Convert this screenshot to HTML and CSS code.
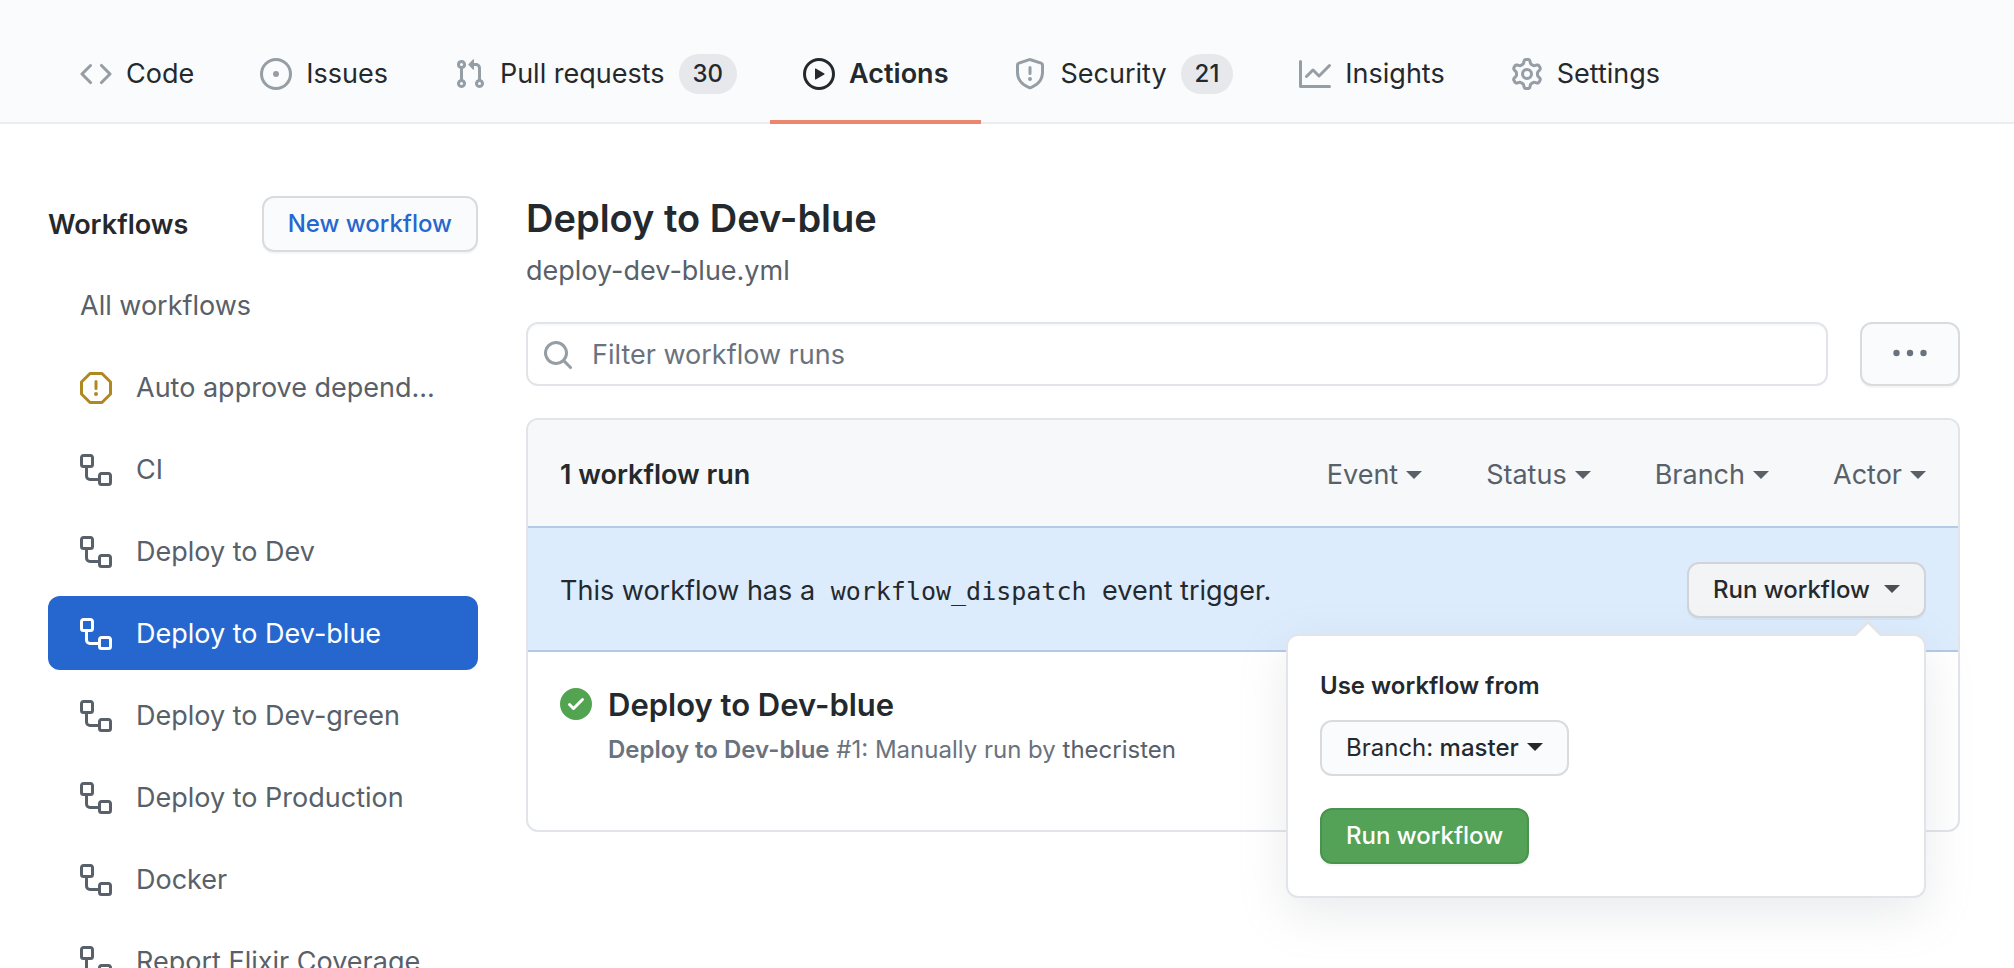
FILE: index.html
```html
<!DOCTYPE html>
<html lang="en">
<head>
<meta charset="utf-8">
<title>Actions · Deploy to Dev-blue</title>
<link rel="stylesheet" href="styles.css">
</head>
<body>
<svg class="sprite" aria-hidden="true">
  <symbol id="i-code" viewBox="0 0 16 16"><path d="M4.72 3.22a.75.75 0 011.06 1.06L2.06 8l3.72 3.72a.75.75 0 11-1.06 1.06L.47 8.53a.75.75 0 010-1.06l4.25-4.25zm6.56 0a.75.75 0 10-1.06 1.06L13.94 8l-3.72 3.72a.75.75 0 101.06 1.06l4.25-4.25a.75.75 0 000-1.06l-4.25-4.25z"/></symbol>
  <symbol id="i-issue" viewBox="0 0 16 16"><circle cx="8" cy="8" r="7.25" fill="none" stroke="currentColor" stroke-width="1.5"/><circle cx="8" cy="8" r="1.5"/></symbol>
  <symbol id="i-pr" viewBox="0 0 16 16"><path fill-rule="evenodd" d="M7.177 3.073L9.573.677A.25.25 0 0110 .854v4.792a.25.25 0 01-.427.177L7.177 3.427a.25.25 0 010-.354zM3.75 2.5a.75.75 0 100 1.5.75.75 0 000-1.5zm-2.25.75a2.25 2.25 0 113 2.122v5.256a2.251 2.251 0 11-1.5 0V5.372A2.25 2.25 0 011.5 3.25zM11 2.5h-1V4h1a1 1 0 011 1v5.628a2.251 2.251 0 101.5 0V5A2.5 2.5 0 0011 2.5zm1 10.25a.75.75 0 111.5 0 .75.75 0 01-1.5 0zM3.75 12a.75.75 0 100 1.5.75.75 0 000-1.5z"/></symbol>
  <symbol id="i-play" viewBox="0 0 16 16"><path fill-rule="evenodd" d="M1.5 8a6.5 6.5 0 1113 0 6.5 6.5 0 01-13 0zM8 0a8 8 0 100 16A8 8 0 008 0zM6.379 5.227A.25.25 0 006 5.442v5.117a.25.25 0 00.379.214l4.264-2.559a.25.25 0 000-.428L6.379 5.227z"/></symbol>
  <symbol id="i-shield" viewBox="0 0 16 16"><path fill-rule="evenodd" d="M7.467.133a1.75 1.75 0 011.066 0l5.25 1.68A1.75 1.75 0 0115 3.48V7c0 1.566-.32 3.182-1.303 4.682-.983 1.498-2.585 2.813-5.032 3.855a1.7 1.7 0 01-1.33 0c-2.447-1.042-4.049-2.357-5.032-3.855C1.32 10.182 1 8.566 1 7V3.48a1.75 1.75 0 011.217-1.667l5.25-1.68zm.61 1.429a.25.25 0 00-.153 0l-5.25 1.68a.25.25 0 00-.174.238V7c0 1.358.275 2.666 1.057 3.86.784 1.194 2.121 2.34 4.366 3.297a.2.2 0 00.154 0c2.245-.956 3.582-2.104 4.366-3.298C13.225 9.666 13.5 8.36 13.5 7V3.48a.25.25 0 00-.174-.237l-5.25-1.68zM9 10.5a1 1 0 11-2 0 1 1 0 012 0zm-.25-5.75a.75.75 0 10-1.5 0v3a.75.75 0 001.5 0v-3z"/></symbol>
  <symbol id="i-graph" viewBox="0 0 16 16"><path fill-rule="evenodd" d="M1.5 1.75a.75.75 0 00-1.5 0v12.5c0 .414.336.75.75.75h14.5a.75.75 0 000-1.5H1.5V1.75zm14.28 2.53a.75.75 0 00-1.06-1.06L10 7.94 7.53 5.47a.75.75 0 00-1.06 0L3.22 8.72a.75.75 0 001.06 1.06L7 7.06l2.47 2.47a.75.75 0 001.06 0l5.25-5.25z"/></symbol>
  <symbol id="i-gear" viewBox="0 0 16 16"><path fill-rule="evenodd" d="M7.429 1.525a6.593 6.593 0 011.142 0c.036.003.108.036.137.146l.289 1.105c.147.56.55.967.997 1.189.174.086.341.183.501.29.417.278.97.423 1.53.27l1.102-.303c.11-.03.175.016.195.046.219.31.41.641.573.989.014.031.022.11-.059.19l-.815.806c-.411.406-.562.957-.53 1.456a4.588 4.588 0 010 .582c-.032.499.119 1.05.53 1.456l.815.806c.08.08.073.159.059.19a6.494 6.494 0 01-.573.99c-.02.029-.086.074-.195.045l-1.103-.303c-.559-.153-1.112-.008-1.529.27-.16.107-.327.204-.5.29-.449.222-.851.628-.998 1.189l-.289 1.105c-.029.11-.101.143-.137.146a6.613 6.613 0 01-1.142 0c-.036-.003-.108-.037-.137-.146l-.289-1.105c-.147-.56-.55-.967-.997-1.189a4.502 4.502 0 01-.501-.29c-.417-.278-.97-.423-1.53-.27l-1.102.303c-.11.03-.175-.016-.195-.046a6.492 6.492 0 01-.573-.989c-.014-.031-.022-.11.059-.19l.815-.806c.411-.406.562-.957.53-1.456a4.587 4.587 0 010-.582c.032-.499-.119-1.05-.53-1.456l-.815-.806c-.08-.08-.073-.159-.059-.19a6.44 6.44 0 01.573-.99c.02-.029.086-.075.195-.045l1.103.303c.559.153 1.112.008 1.529-.27.16-.107.327-.204.5-.29.449-.222.851-.628.998-1.189l.289-1.105c.029-.11.101-.143.137-.146zM8 0c-.236 0-.47.01-.701.03-.743.065-1.29.615-1.458 1.261l-.29 1.106c-.017.066-.078.158-.211.224a5.994 5.994 0 00-.668.386c-.123.082-.233.09-.3.071L3.27 2.776c-.644-.177-1.392.02-1.82.63a7.977 7.977 0 00-.704 1.217c-.315.675-.111 1.422.363 1.891l.815.806c.05.048.098.147.088.294a6.084 6.084 0 000 .772c.01.147-.038.246-.088.294l-.815.806c-.474.469-.678 1.216-.363 1.891.2.428.436.835.704 1.218.428.609 1.176.806 1.82.63l1.103-.303c.066-.019.176-.011.299.071.213.143.436.272.668.386.133.066.194.158.212.224l.289 1.106c.169.646.715 1.196 1.458 1.26a8.094 8.094 0 001.402 0c.743-.064 1.29-.614 1.458-1.26l.29-1.106c.017-.066.078-.158.211-.224a5.98 5.98 0 00.668-.386c.123-.082.233-.09.3-.071l1.102.302c.644.177 1.392-.02 1.82-.63.268-.382.505-.789.704-1.217.315-.675.111-1.422-.364-1.891l-.814-.806c-.05-.048-.098-.147-.088-.294a6.1 6.1 0 000-.772c-.01-.147.039-.246.088-.294l.814-.806c.475-.469.679-1.216.364-1.891a7.992 7.992 0 00-.704-1.218c-.428-.609-1.176-.806-1.82-.63l-1.103.303c-.066.019-.176.011-.299-.071a5.991 5.991 0 00-.668-.386c-.133-.066-.194-.158-.212-.224L10.16 1.29C9.99.645 9.444.095 8.701.031A8.094 8.094 0 008 0zm1.5 8a1.5 1.5 0 11-3 0 1.5 1.5 0 013 0zM11 8a3 3 0 11-6 0 3 3 0 016 0z"/></symbol>
  <symbol id="i-workflow" viewBox="0 0 16 16"><path fill-rule="evenodd" d="M0 1.75C0 .784.784 0 1.75 0h3.5C6.216 0 7 .784 7 1.75v3.5A1.75 1.75 0 015.25 7H4v4a1 1 0 001 1h4v-1.25C9 9.784 9.784 9 10.75 9h3.5c.966 0 1.75.784 1.75 1.75v3.5A1.75 1.75 0 0114.25 16h-3.5A1.75 1.75 0 019 14.25v-.75H5A2.5 2.5 0 012.5 11V7h-.75A1.75 1.75 0 010 5.25v-3.5zm1.75-.25a.25.25 0 00-.25.25v3.5c0 .138.112.25.25.25h3.5a.25.25 0 00.25-.25v-3.5a.25.25 0 00-.25-.25h-3.5zm9 9a.25.25 0 00-.25.25v3.5c0 .138.112.25.25.25h3.5a.25.25 0 00.25-.25v-3.5a.25.25 0 00-.25-.25h-3.5z"/></symbol>
  <symbol id="i-stop" viewBox="0 0 16 16"><path fill-rule="evenodd" d="M4.47.22A.75.75 0 015 0h6a.75.75 0 01.53.22l4.25 4.25c.141.14.22.331.22.53v6a.75.75 0 01-.22.53l-4.25 4.25A.75.75 0 0111 16H5a.75.75 0 01-.53-.22L.22 11.53A.75.75 0 010 11V5a.75.75 0 01.22-.53L4.47.22zm.84 1.28L1.5 5.31v5.38l3.81 3.81h5.38l3.81-3.81V5.31L10.69 1.5H5.31zM8 4a.75.75 0 01.75.75v3.5a.75.75 0 01-1.5 0v-3.5A.75.75 0 018 4zm0 8a1 1 0 100-2 1 1 0 000 2z"/></symbol>
  <symbol id="i-search" viewBox="0 0 16 16"><path fill-rule="evenodd" d="M11.5 7a4.499 4.499 0 11-8.998 0A4.499 4.499 0 0111.5 7zm-.82 4.74a6 6 0 111.06-1.06l3.04 3.04a.75.75 0 11-1.06 1.06l-3.04-3.04z"/></symbol>
  <symbol id="i-check" viewBox="0 0 16 16"><path fill-rule="evenodd" d="M8 16A8 8 0 108 0a8 8 0 000 16zm3.78-9.72a.75.75 0 00-1.06-1.06L6.75 9.19 5.28 7.72a.75.75 0 00-1.06 1.06l2 2a.75.75 0 001.06 0l4.5-4.5z"/></symbol>
</svg>

<header class="topbar">
  <nav class="tabs" aria-label="Repository">
    <a class="tab" href="#"><svg class="icon"><use href="#i-code"/></svg>Code</a>
    <a class="tab" href="#"><svg class="icon"><use href="#i-issue"/></svg>Issues</a>
    <a class="tab" href="#"><svg class="icon"><use href="#i-pr"/></svg>Pull requests<span class="counter">30</span></a>
    <a class="tab tab-current" href="#" aria-current="page"><svg class="icon"><use href="#i-play"/></svg>Actions</a>
    <a class="tab" href="#"><svg class="icon"><use href="#i-shield"/></svg>Security<span class="counter">21</span></a>
    <a class="tab" href="#"><svg class="icon"><use href="#i-graph"/></svg>Insights</a>
    <a class="tab" href="#"><svg class="icon"><use href="#i-gear"/></svg>Settings</a>
  </nav>
</header>

<div class="layout">
  <aside class="sidebar">
    <div class="sidebar-head">
      <h2 class="sidebar-title">Workflows</h2>
      <button class="btn btn-link" type="button">New workflow</button>
    </div>
    <nav class="menu" aria-label="Workflows">
      <a class="menu-item" href="#">All workflows</a>
      <a class="menu-item" href="#"><svg class="icon icon-warn"><use href="#i-stop"/></svg>Auto approve depend...</a>
      <a class="menu-item" href="#"><svg class="icon"><use href="#i-workflow"/></svg>CI</a>
      <a class="menu-item" href="#"><svg class="icon"><use href="#i-workflow"/></svg>Deploy to Dev</a>
      <a class="menu-item menu-current" href="#" aria-current="page"><svg class="icon"><use href="#i-workflow"/></svg>Deploy to Dev-blue</a>
      <a class="menu-item" href="#"><svg class="icon"><use href="#i-workflow"/></svg>Deploy to Dev-green</a>
      <a class="menu-item" href="#"><svg class="icon"><use href="#i-workflow"/></svg>Deploy to Production</a>
      <a class="menu-item" href="#"><svg class="icon"><use href="#i-workflow"/></svg>Docker</a>
      <a class="menu-item" href="#"><svg class="icon"><use href="#i-workflow"/></svg>Report Elixir Coverage</a>
    </nav>
  </aside>

  <main class="main">
    <h1 class="title">Deploy to Dev-blue</h1>
    <p class="subtitle">deploy-dev-blue.yml</p>

    <div class="toolbar">
      <label class="search">
        <svg class="icon"><use href="#i-search"/></svg>
        <input class="search-input" type="text" placeholder="Filter workflow runs" aria-label="Filter workflow runs">
      </label>
      <button class="btn btn-more" type="button" aria-label="More options">
        <svg class="dots" viewBox="0 0 34 8"><circle cx="3.5" cy="4" r="3.2"/><circle cx="17" cy="4" r="3.2"/><circle cx="30.5" cy="4" r="3.2"/></svg>
      </button>
    </div>

    <section class="box">
      <div class="box-head">
        <strong class="count">1 workflow run</strong>
        <div class="filters">
          <button class="filter" type="button">Event<span class="caret"></span></button>
          <button class="filter" type="button">Status<span class="caret"></span></button>
          <button class="filter" type="button">Branch<span class="caret"></span></button>
          <button class="filter" type="button">Actor<span class="caret"></span></button>
        </div>
      </div>

      <div class="dispatch">
        <p class="dispatch-text">This workflow has a <code class="code">workflow_dispatch</code> event trigger.</p>
        <div class="dropdown">
          <button class="btn btn-open" type="button" aria-expanded="true">Run workflow<span class="caret"></span></button>
          <div class="popover">
            <p class="popover-title">Use workflow from</p>
            <button class="btn btn-branch" type="button"><span><span class="light">Branch:</span> master</span><span class="caret"></span></button>
            <button class="btn btn-primary" type="button">Run workflow</button>
          </div>
        </div>
      </div>

      <article class="run">
        <svg class="icon icon-ok"><use href="#i-check"/></svg>
        <div class="run-body">
          <h3 class="run-title">Deploy to Dev-blue</h3>
          <p class="run-meta"><strong>Deploy to Dev-blue</strong> #1: Manually run by <a class="author" href="#">thecristen</a></p>
        </div>
      </article>
    </section>
  </main>
</div>
</body>
</html>
```
FILE: styles.css
```css
* { box-sizing: border-box; }

body {
  height: 100vh;
  margin: 0;
  overflow: hidden;
  background: #fff;
  color: #24292e;
  font: 400 27px/42px Inter, "Liberation Sans", sans-serif;
}

h1, h2, h3, p { margin: 0; }
a { color: inherit; text-decoration: none; }
button { font-family: inherit; color: inherit; white-space: nowrap; }

.sprite { display: none; }
.icon {
  flex: none;
  width: 32px;
  height: 32px;
  fill: currentColor;
}
.caret {
  flex: none;
  border: 8px solid transparent;
  border-top-color: currentColor;
  border-bottom: 0;
}

/* Repository tabs */
.topbar {
  padding: 24px 47px 0;
  background: #fafbfc;
  border-bottom: 2px solid #eaecef;
}
.tabs {
  display: flex;
  margin-bottom: -2px;
}
.tab {
  display: flex;
  align-items: center;
  gap: 14px;
  height: 100px;
  padding: 0 33px;
  border: solid transparent;
  border-width: 4px 0;
  white-space: nowrap;
}
.tab .icon { color: #959da5; }
.tab-current {
  border-bottom-color: #ec866f;
  font-weight: 600;
}
.tab-current .icon { color: inherit; }
.counter {
  padding: 0 14px;
  border-radius: 20px;
  background: #e7e8eb;
  font-size: 24px;
  font-weight: 500;
  line-height: 40px;
}

/* Page columns */
.layout {
  display: grid;
  grid-template-columns: 430px minmax(0, 1fr);
  gap: 48px;
  padding: 68px 54px 0 48px;
}

.btn {
  display: inline-flex;
  align-items: center;
  justify-content: center;
  height: 56px;
  padding: 0 24px 2px;
  border: 2px solid #d9dbdd;
  border-radius: 12px;
  background: #fafbfc;
  box-shadow: 0 2px 0 rgba(27, 31, 35, 0.04);
  font-size: 24px;
  font-weight: 500;
}

/* Sidebar */
.sidebar { padding-top: 4px; }
.sidebar-head {
  display: flex;
  align-items: center;
  justify-content: space-between;
  margin-bottom: 16px;
}
.sidebar-title {
  padding-top: 2px;
  font-size: 27px;
  font-weight: 600;
}
.btn-link { color: #2667cf; }
.menu {
  display: flex;
  flex-direction: column;
  gap: 8px;
}
.menu-item {
  display: flex;
  align-items: center;
  gap: 24px;
  padding: 17px 32px 15px;
  border-radius: 12px;
  color: #586069;
  white-space: nowrap;
}
.icon-warn { color: #b08823; }
.menu-current {
  background: #2667cf;
  color: #fff;
}

/* Main column */
.title {
  font-size: 38px;
  font-weight: 600;
  line-height: 52px;
}
.subtitle {
  margin-top: 6px;
  color: #586069;
}
.toolbar {
  display: flex;
  gap: 32px;
  margin: 30px 0 32px;
}
.search {
  display: flex;
  flex: 1;
  align-items: center;
  gap: 18px;
  height: 64px;
  padding: 2px 14px 0;
  border: 2px solid #e1e4e8;
  border-radius: 12px;
  box-shadow: inset 0 2px 0 rgba(225, 228, 232, 0.2);
  color: #959da5;
}
.search-input {
  flex: 1;
  min-width: 0;
  padding: 0;
  border: 0;
  outline: 0;
  background: none;
  color: #24292e;
  font: inherit;
}
.search-input::placeholder { color: #6a737d; opacity: 1; }
.btn-more {
  width: 100px;
  height: 64px;
}
.dots {
  width: 34px;
  height: 8px;
  flex: none;
  fill: #6a737d;
}

.box {
  border: 2px solid #e1e4e8;
  border-radius: 12px;
}
.box-head {
  display: flex;
  align-items: center;
  justify-content: space-between;
  padding: 34px 32px 30px;
  border-radius: 10px 10px 0 0;
  background: #f6f8fa;
}
.count { font-weight: 600; }
.filters {
  display: flex;
  gap: 64px;
}
.filter {
  display: flex;
  align-items: center;
  gap: 8px;
  padding: 0;
  border: 0;
  background: none;
  color: #586069;
  font-size: 27px;
  line-height: 42px;
}

.dispatch {
  display: flex;
  align-items: center;
  justify-content: space-between;
  padding: 34px 32px 32px;
  border: solid #b4c9e6;
  border-width: 2px 0;
  background: #dcecfd;
}
.dispatch-text { padding-top: 2px; }
.code {
  padding: 0 8px;
  font-family: "DejaVu Sans Mono", "Liberation Mono", monospace;
  font-size: 25px;
}
.dropdown {
  position: relative;
  display: flex;
}
.btn-open {
  gap: 14px;
  border-color: #d1d4d7;
  background: #f3f4f6;
}
.btn-open .caret { color: #4b4f53; }

.popover {
  position: absolute;
  top: calc(100% + 16px);
  right: 0;
  z-index: 1;
  display: flex;
  flex-direction: column;
  align-items: flex-start;
  width: 640px;
  padding: 32px;
  border: 2px solid #e1e4e8;
  border-radius: 12px;
  background: #fff;
  box-shadow: 0 16px 48px rgba(149, 157, 165, 0.2);
}
.popover::before,
.popover::after {
  content: "";
  position: absolute;
  bottom: 100%;
  right: 40px;
  border: 16px solid transparent;
  border-top: 0;
  border-bottom-color: #e1e4e8;
}
.popover::after {
  right: 42px;
  border-width: 0 14px 14px;
  border-bottom-color: #fff;
  margin-bottom: -2px;
}
.popover-title {
  margin-bottom: 16px;
  font-size: 24px;
  font-weight: 600;
  line-height: 36px;
}
.btn-branch {
  gap: 8px;
  margin-bottom: 32px;
  box-shadow: none;
}
.light { font-weight: 400; }
.btn-primary {
  border-color: #4a934e;
  background: #54a257;
  color: #fff;
}

.run {
  display: flex;
  gap: 16px;
  padding: 32px 32px 62px;
}
.icon-ok {
  margin-top: 4px;
  color: #52a450;
}
.run-title {
  font-size: 31px;
  font-weight: 600;
  line-height: 42px;
}
.run-meta {
  margin-top: 6px;
  color: #6a737d;
  font-size: 24px;
  line-height: 36px;
}
.run-meta strong { font-weight: 600; }
.author { color: #586069; }
```
